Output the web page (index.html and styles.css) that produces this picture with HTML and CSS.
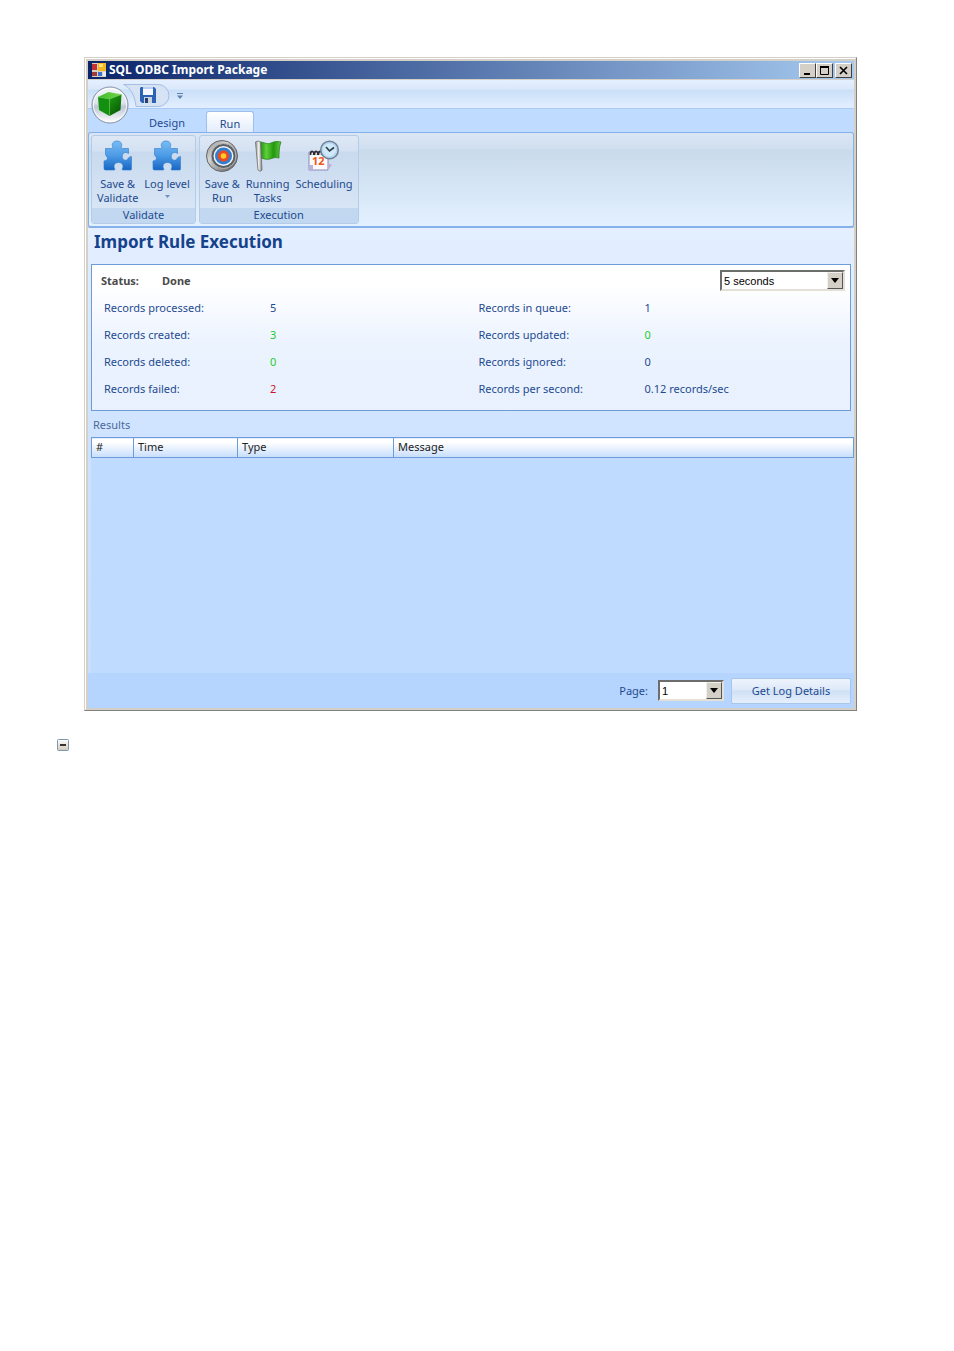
FILE: index.html
```
<!DOCTYPE html>
<html lang="en">
<head>
    <meta charset="UTF-8">
    <meta name="viewport" content="width=device-width, initial-scale=1.0">
    <title>SQL ODBC Import Package</title>
    <link rel="stylesheet" href="styles.css">
</head>
<body>
    <div class="window">
        <div class="window-inner">
            <div class="titlebar">
                <svg class="app-icon" viewBox="0 0 16 16" width="16" height="16">
                    <rect x="1" y="1" width="14" height="14" fill="#d8d0c4"/>
                    <rect x="1" y="2" width="5" height="6" fill="#c8322c"/>
                    <rect x="7" y="1" width="8" height="8" fill="#f4b824"/>
                    <rect x="8" y="2" width="4" height="3" fill="#ffe27a"/>
                    <rect x="1" y="10" width="5" height="4" fill="#a03a3c"/>
                    <rect x="7" y="10" width="4" height="4" fill="#3b6fd0"/>
                    <rect x="12" y="10" width="3" height="4" fill="#e6ecf6"/>
                </svg>
                <span class="title">SQL ODBC Import Package</span>
                <div class="window-buttons">
                    <button aria-label="Minimize"><svg viewBox="0 0 13 12" width="13" height="12"><rect x="3" y="8" width="6" height="2"/></svg></button>
                    <button aria-label="Maximize"><svg viewBox="0 0 13 12" width="13" height="12"><path d="M2.500 1v8.500h8V1" fill="none" stroke="#000"/><rect x="2" y="1" width="9" height="2"/></svg></button>
                    <button class="close" aria-label="Close"><svg viewBox="0 0 13 12" width="13" height="12"><path d="M3 2l7 7M10 2l-7 7" stroke="#000" stroke-width="1.600"/></svg></button>
                </div>
            </div>

            <div class="quickbar">
                <button class="orb" aria-label="Menu">
                    <svg viewBox="0 0 38 38" width="38" height="38">
                        <defs>
                            <linearGradient id="orbFill" x1="0" y1="0" x2="0" y2="1">
                                <stop offset="0" stop-color="#f4f6fa"/>
                                <stop offset="0.45" stop-color="#dde2ea"/>
                                <stop offset="0.55" stop-color="#bcc6d4"/>
                                <stop offset="1" stop-color="#ffffff"/>
                            </linearGradient>
                            <linearGradient id="cubeTop" x1="0" y1="0" x2="1" y2="0">
                                <stop offset="0" stop-color="#3cba28"/>
                                <stop offset="1" stop-color="#76d64e"/>
                            </linearGradient>
                            <linearGradient id="cubeRight" x1="0" y1="0" x2="0.6" y2="1">
                                <stop offset="0" stop-color="#1fa012"/>
                                <stop offset="1" stop-color="#075c05"/>
                            </linearGradient>
                        </defs>
                        <circle cx="19" cy="19" r="18" fill="url(#orbFill)" stroke="#8492a8"/>
                        <circle cx="19" cy="19" r="16.600" fill="none" stroke="#fff" stroke-opacity=".8"/>
                        <path d="M7 11L17.500 6l13 2.500-12 4.500z" fill="url(#cubeTop)"/>
                        <path d="M7 11l11.500 2v17L8 24z" fill="#149010"/>
                        <path d="M18.500 13l12-4.500-1 15.500-11 6z" fill="url(#cubeRight)"/>
                        <path d="M7 11l11.500 2 12-4.500M18.500 13v16" fill="none" stroke="#64cc48" stroke-width=".5"/>
                    </svg>
                </button>
                <div class="quick-tools">
                    <svg class="quick-shape" viewBox="0 0 47 23" width="47" height="23">
                        <path d="M.5.500H35a11 11 0 0 1 0 22H13C12 12 8 4 .5.500z" fill="#d5e3f5" stroke="#a5bfe2"/>
                    </svg>
                    <button class="save" aria-label="Save">
                        <svg viewBox="0 0 16 16" width="16" height="16">
                            <path d="M1 0h13l2 2v14H2l-2-2V1z" fill="#2c63b4"/>
                            <rect x="3" y="0" width="10" height="8" fill="#f4f8ff"/>
                            <rect x="3" y="0" width="10" height="2" fill="#b9d0f0"/>
                            <rect x="4" y="10" width="8" height="6" fill="#c9d3e2"/>
                            <rect x="5" y="11" width="3" height="5" fill="#23406f"/>
                        </svg>
                    </button>
                </div>
                <button class="quick-more" aria-label="Customize">
                    <svg viewBox="0 0 6 6" width="6" height="6"><rect width="6" height="1" fill="#5f80b0"/><path d="M0 2.500h6L3 6z" fill="#5f80b0"/></svg>
                </button>
            </div>

            <div class="tabs">
                <button class="tab">Design</button>
                <button class="tab active">Run</button>
            </div>

            <div class="ribbon">
                <div class="group">
                    <div class="group-items">
                        <button class="tool">
                            <svg viewBox="0 0 32 32" width="32" height="32">
                                <defs>
                                    <linearGradient id="puzzle" x1="0" y1="0" x2="0" y2="1">
                                        <stop offset="0" stop-color="#79bcf2"/>
                                        <stop offset="0.5" stop-color="#4c9be6"/>
                                        <stop offset="1" stop-color="#1766c4"/>
                                    </linearGradient>
                                </defs>
                                <path class="puzzle" d="M3.500 8.500h6c1.500 0 1.500-1 1-2C9.500 3.500 11.500 1 15 1s5.500 2.500 4.500 5.500c-.5 1 0 2 1 2h6v5c-1-.8-2.500-1.300-4-.8-3 1-3 6.300 0 7.300 1.500.5 3 0 3.500-1.500.5-1 2-2 3.500-2V29q0 1-1 1h-8c-1-1 .5-2 .5-3.500 0-2.500-1.800-4-4.500-4s-4.500 1.500-4.500 4c0 1.500 1.500 2.500.5 3.500H3.500Q2 30 2 28.500V21c1.500-.5 3.300-.8 3.500-2.500.2-1.500-2-2.500-2-4.500z"/>
                            </svg>
                            <span>Save &amp;<br>Validate</span>
                        </button>
                        <button class="tool">
                            <svg viewBox="0 0 32 32" width="32" height="32">
                                <path class="puzzle" d="M3.500 8.500h6c1.500 0 1.500-1 1-2C9.500 3.500 11.500 1 15 1s5.500 2.500 4.500 5.500c-.5 1 0 2 1 2h6v5c-1-.8-2.500-1.300-4-.8-3 1-3 6.300 0 7.300 1.500.5 3 0 3.500-1.500.5-1 2-2 3.500-2V29q0 1-1 1h-8c-1-1 .5-2 .5-3.500 0-2.500-1.800-4-4.500-4s-4.500 1.500-4.500 4c0 1.500 1.500 2.500.5 3.500H3.500Q2 30 2 28.500V21c1.500-.5 3.300-.8 3.500-2.500.2-1.500-2-2.500-2-4.500z"/>
                            </svg>
                            <span>Log level</span>
                            <svg class="caret" viewBox="0 0 5 3" width="5" height="3"><path d="M0 0h5L2.500 3z" fill="#6f8db8"/></svg>
                        </button>
                    </div>
                    <div class="group-label">Validate</div>
                </div>

                <div class="group">
                    <div class="group-items">
                        <button class="tool">
                            <svg viewBox="0 0 32 32" width="32" height="32">
                                <defs>
                                    <linearGradient id="metal" x1="0" y1="0" x2="1" y2="1">
                                        <stop offset="0" stop-color="#8c8c8c"/>
                                        <stop offset="0.35" stop-color="#d4d4d4"/>
                                        <stop offset="1" stop-color="#555"/>
                                    </linearGradient>
                                </defs>
                                <circle cx="16" cy="16" r="15.500" fill="url(#metal)" stroke="#666"/>
                                <circle cx="17.500" cy="16" r="12.500" fill="#5a5f66" stroke="#b8b8b8"/>
                                <circle cx="17.500" cy="16" r="10" fill="#f4f4f4"/>
                                <circle cx="17.500" cy="16" r="8.500" fill="#2f7fd6"/>
                                <circle cx="17.500" cy="16" r="5.800" fill="#ea4b22"/>
                                <circle cx="17.500" cy="16" r="2.800" fill="#ffc928"/>
                            </svg>
                            <span>Save &amp;<br>Run</span>
                        </button>
                        <button class="tool">
                            <svg viewBox="0 0 32 32" width="32" height="32">
                                <defs>
                                    <linearGradient id="flag" x1="0" y1="0" x2="1" y2="0">
                                        <stop offset="0" stop-color="#1c8a12"/>
                                        <stop offset="0.3" stop-color="#5fd03a"/>
                                        <stop offset="0.65" stop-color="#23980f"/>
                                        <stop offset="1" stop-color="#63c841"/>
                                    </linearGradient>
                                    <linearGradient id="pole" x1="0" y1="0" x2="1" y2="0">
                                        <stop offset="0" stop-color="#8d8d8d"/>
                                        <stop offset="0.5" stop-color="#f4f4f4"/>
                                        <stop offset="1" stop-color="#777"/>
                                    </linearGradient>
                                </defs>
                                <path d="M8 2c4 0 7 3 11 1 3-1.500 6-2 10-1-2 5-2 11-2 16-4-1-6 0-9 1-3 .8-6 0-9-1z" fill="url(#flag)" stroke="#1d7a10" stroke-width=".7"/>
                                <path d="M3.500 2q2.500-2 5 0l1.500 28q-1.500 2.500-4 0z" fill="url(#pole)" stroke="#6f6f6f" stroke-width=".8"/>
                            </svg>
                            <span>Running<br>Tasks</span>
                        </button>
                        <button class="tool">
                            <svg viewBox="0 0 32 32" width="32" height="32">
                                <path d="M1 12h19v18H1z" fill="#fbfbff" stroke="#8d86b8"/>
                                <path d="M1 25h4v5H1zM20 23l4 2-4 5z" fill="#b9b2d8"/>
                                <path d="M2.500 15q0-4 2-3.500t1 3.500M6.500 15q0-4 2-3.500t1 3.500M10.500 15q0-4 2-3.500t1 3.500" fill="none" stroke="#2d2d33" stroke-width="1.800"/>
                                <text class="cal-day" x="4" y="25">12</text>
                                <circle cx="21.500" cy="10" r="8.800" fill="#b7d6ee" stroke="#6f8496" stroke-width="1.500"/>
                                <circle cx="21.500" cy="10" r="6.500" fill="#cfe9fa"/>
                                <path d="M18 7l3.500 4L26 7.500" fill="none" stroke="#2f3c48" stroke-width="1.600"/>
                            </svg>
                            <span>Scheduling</span>
                        </button>
                    </div>
                    <div class="group-label">Execution</div>
                </div>
            </div>

            <div class="content">
                <h1>Import Rule Execution</h1>

                <div class="status-panel">
                    <div class="status-row">
                        <span class="status-label">Status:</span>
                        <span>Done</span>
                        <div class="combo interval">
                            <select aria-label="Refresh interval">
                                <option>5 seconds</option>
                            </select>
                            <span class="combo-arrow"><svg viewBox="0 0 8 5" width="8" height="5"><path d="M0 0h8L4 5z"/></svg></span>
                        </div>
                    </div>
                    <div class="stats">
                        <dl>
                            <dt>Records processed:</dt><dd>5</dd>
                            <dt>Records created:</dt><dd class="ok">3</dd>
                            <dt>Records deleted:</dt><dd class="ok">0</dd>
                            <dt>Records failed:</dt><dd class="failed">2</dd>
                        </dl>
                        <dl>
                            <dt>Records in queue:</dt><dd>1</dd>
                            <dt>Records updated:</dt><dd class="ok">0</dd>
                            <dt>Records ignored:</dt><dd>0</dd>
                            <dt>Records per second:</dt><dd>0.12 records/sec</dd>
                        </dl>
                    </div>
                </div>

                <div class="results-title">Results</div>
                <div class="results">
                    <table>
                        <thead>
                            <tr>
                                <th class="col-num">#</th>
                                <th class="col-time">Time</th>
                                <th class="col-type">Type</th>
                                <th>Message</th>
                            </tr>
                        </thead>
                        <tbody></tbody>
                    </table>
                </div>
            </div>

            <div class="footer">
                <label for="page">Page:</label>
                <div class="combo page">
                    <select id="page">
                        <option>1</option>
                    </select>
                    <span class="combo-arrow"><svg viewBox="0 0 8 5" width="8" height="5"><path d="M0 0h8L4 5z"/></svg></span>
                </div>
                <button class="log-button">Get Log Details</button>
            </div>
        </div>
    </div>

    <button class="collapse" aria-label="Collapse">
        <svg viewBox="0 0 12 12" width="12" height="12">
            <defs>
                <linearGradient id="box" x1="0" y1="0" x2="0" y2="1">
                    <stop offset="0" stop-color="#fff"/>
                    <stop offset="1" stop-color="#cfc8b8"/>
                </linearGradient>
            </defs>
            <rect x=".5" y=".5" width="11" height="11" rx="1" fill="url(#box)" stroke="#7898b5"/>
            <rect x="3" y="5" width="6" height="2" fill="#333"/>
        </svg>
    </button>
</body>
</html>
```
FILE: styles.css
```
* {
    box-sizing: border-box;
}

body {
    margin: 0;
    padding: 57px 97px 40px 84px;
    background-color: #fff;
    font-family: 'Noto Sans', 'Open Sans', sans-serif;
    font-size: 11px;
    line-height: 14px;
    color: #1e4a8f;
}

button {
    margin: 0;
    padding: 0;
    border: none;
    background: none;
    font: inherit;
    color: inherit;
}

svg {
    display: block;
}

/* window frame */
.window {
    border: 1px solid;
    border-color: #d4d0c8 #808080 #808080 #d4d0c8;
}

.window-inner {
    border: 1px solid;
    border-color: #fff #d4d0c8 #d4d0c8 #fff;
    padding: 2px 1px 1px 2px;
    background-color: #d4d0c8;
}

.titlebar {
    display: flex;
    align-items: center;
    height: 18px;
    margin-bottom: 1px;
    padding: 0 2px 0 3px;
    background: linear-gradient(to right, #0a246a, #a6caf0);
    color: #fff;
}

.app-icon {
    margin-right: 2px;
}

.title {
    flex: 1;
    font-size: 12px;
    font-weight: bold;
}

.window-buttons {
    display: flex;
}

.window-buttons button {
    width: 17px;
    height: 15px;
    padding: 1px;
    background-color: #d4d0c8;
    border: 1px solid;
    border-color: #fff #404040 #404040 #fff;
}

.window-buttons .close {
    margin-left: 2px;
}

/* quick access bar */
.quickbar {
    position: relative;
    display: flex;
    height: 29px;
    padding: 4px 0 0 35px;
    background: linear-gradient(to bottom, #e4efff 0, #dce9fb 9px, #cadff8 10px, #e2eeff 27px);
    border-bottom: 1px solid #a9cbf7;
}

.orb {
    position: absolute;
    left: 3px;
    top: 6px;
    z-index: 1;
}

.quick-tools {
    position: relative;
    width: 47px;
    height: 23px;
    padding: 3px 0 0 17px;
}

.quick-shape {
    position: absolute;
    left: 0;
    top: 0;
}

.save {
    position: relative;
}

.quick-more {
    padding: 0 7px;
}

.tabs {
    display: flex;
    align-items: flex-end;
    height: 23px;
    padding-left: 48px;
    background-color: #bfdbff;
}

.tab {
    width: 62px;
    height: 21px;
    padding-top: 3px;
    border: 1px solid transparent;
}

.tab + .tab {
    margin-left: 8px;
    width: 48px;
}

.tab.active {
    background: linear-gradient(to bottom, #fff, #e3edfb);
    border-color: #9dbff0;
    border-bottom: none;
    border-radius: 3px 3px 0 0;
}

/* ribbon */
.ribbon {
    display: flex;
    gap: 3px;
    padding: 2px;
    border: 1px solid #86b0ec;
    border-bottom-width: 2px;
    border-radius: 3px;
    background: linear-gradient(to bottom, #dbe6f4 0, #cfdfef 16px, #c9daeb 17px, #e3f1ff 100%);
}

.group {
    border: 1px solid #b5cce8;
    border-radius: 3px;
    overflow: hidden;
    background: linear-gradient(to bottom, #dee8f5 0, #d4e1f2 15px, #c9daee 16px, #dbe8f7 100%);
}

.group-items {
    display: flex;
    height: 72px;
    padding: 4px 2px 0;
}

.tool {
    display: flex;
    flex-direction: column;
    align-items: center;
    padding: 0 3px;
}

.tool span {
    margin-top: 5px;
}

.tool .caret {
    margin-top: 4px;
}

.puzzle {
    fill: url(#puzzle);
    stroke: #2c78cc;
    stroke-width: 0.6;
}

.cal-day {
    font-size: 11px;
    font-weight: bold;
    fill: #f05a14;
}

.group-label {
    height: 15px;
    background-color: #c1d8f0;
    text-align: center;
}

/* content */
.content {
    padding: 0 0 0 3px;
    background: linear-gradient(to bottom, #e4efff, #cde2ff 230px, #c5dfff);
}

h1 {
    margin: 0;
    padding: 2px 3px 0;
    height: 36px;
    font-size: 17px;
    line-height: 24px;
    color: #15428b;
}

.status-panel {
    margin-right: 3px;
    height: 147px;
    padding: 2px 5px 0 9px;
    border: 1px solid #6e9cd9;
    background: linear-gradient(to bottom, #fff, #fff 20px, #ebf3ff 80px, #e9f1fe);
}

.status-row {
    display: flex;
    align-items: center;
    height: 27px;
    font-weight: bold;
    color: #4a4a4a;
}

.status-label {
    width: 61px;
}

.combo {
    position: relative;
    height: 21px;
    border: 2px solid;
    border-color: #6d6d6d #e4e0d8 #e4e0d8 #6d6d6d;
}

.interval {
    width: 125px;
    margin-left: auto;
}

.combo select {
    display: block;
    width: 100%;
    height: 17px;
    padding: 0 18px 0 2px;
    border: none;
    border-radius: 0;
    appearance: none;
    background-color: #fff;
    font-family: 'Liberation Sans', Arial, sans-serif;
    font-size: 11px;
    color: #000;
}

.combo-arrow {
    position: absolute;
    top: 0;
    right: 0;
    display: flex;
    align-items: center;
    justify-content: center;
    width: 16px;
    height: 17px;
    background-color: #d4d0c8;
    border: 1px solid;
    border-color: #f2f0ec #555 #555 #f2f0ec;
    pointer-events: none;
}

.stats {
    display: grid;
    grid-template-columns: 1fr 1fr;
    gap: 8px;
    padding-left: 3px;
}

.stats dl {
    display: grid;
    grid-template-columns: 166px 1fr;
    margin: 0;
    line-height: 27px;
}

.stats dd {
    margin: 0;
}

.stats .ok {
    color: #1fcc2a;
}

.stats .failed {
    color: #cc1420;
}

.results-title {
    height: 26px;
    padding: 7px 2px 0;
    color: #4a6a9c;
}

.results {
    height: 236px;
    background-color: #bfdbff;
}

table {
    width: 100%;
    table-layout: fixed;
    border-collapse: collapse;
}

th {
    height: 20px;
    padding: 0 4px 2px;
    border: 1px solid #6e9cd9;
    background: linear-gradient(to bottom, #fff 20%, #c6ddfc);
    font-weight: normal;
    text-align: left;
    color: #222;
}

.col-num {
    width: 42px;
}

.col-time {
    width: 104px;
}

.col-type {
    width: 156px;
}

.footer {
    display: flex;
    justify-content: flex-end;
    align-items: center;
    height: 35px;
    padding-right: 3px;
    background-color: #b5d5ff;
}

.page {
    width: 66px;
    margin: 0 7px 0 10px;
}

.log-button {
    width: 120px;
    height: 26px;
    border: 1px solid #a9c5ea;
    border-radius: 2px;
    background: linear-gradient(to bottom, #eef4fd, #dde9f8 45%, #cfe0f5 50%, #e6f0fd);
}

.collapse {
    display: block;
    margin: 28px 0 0 -27px;
}
```
